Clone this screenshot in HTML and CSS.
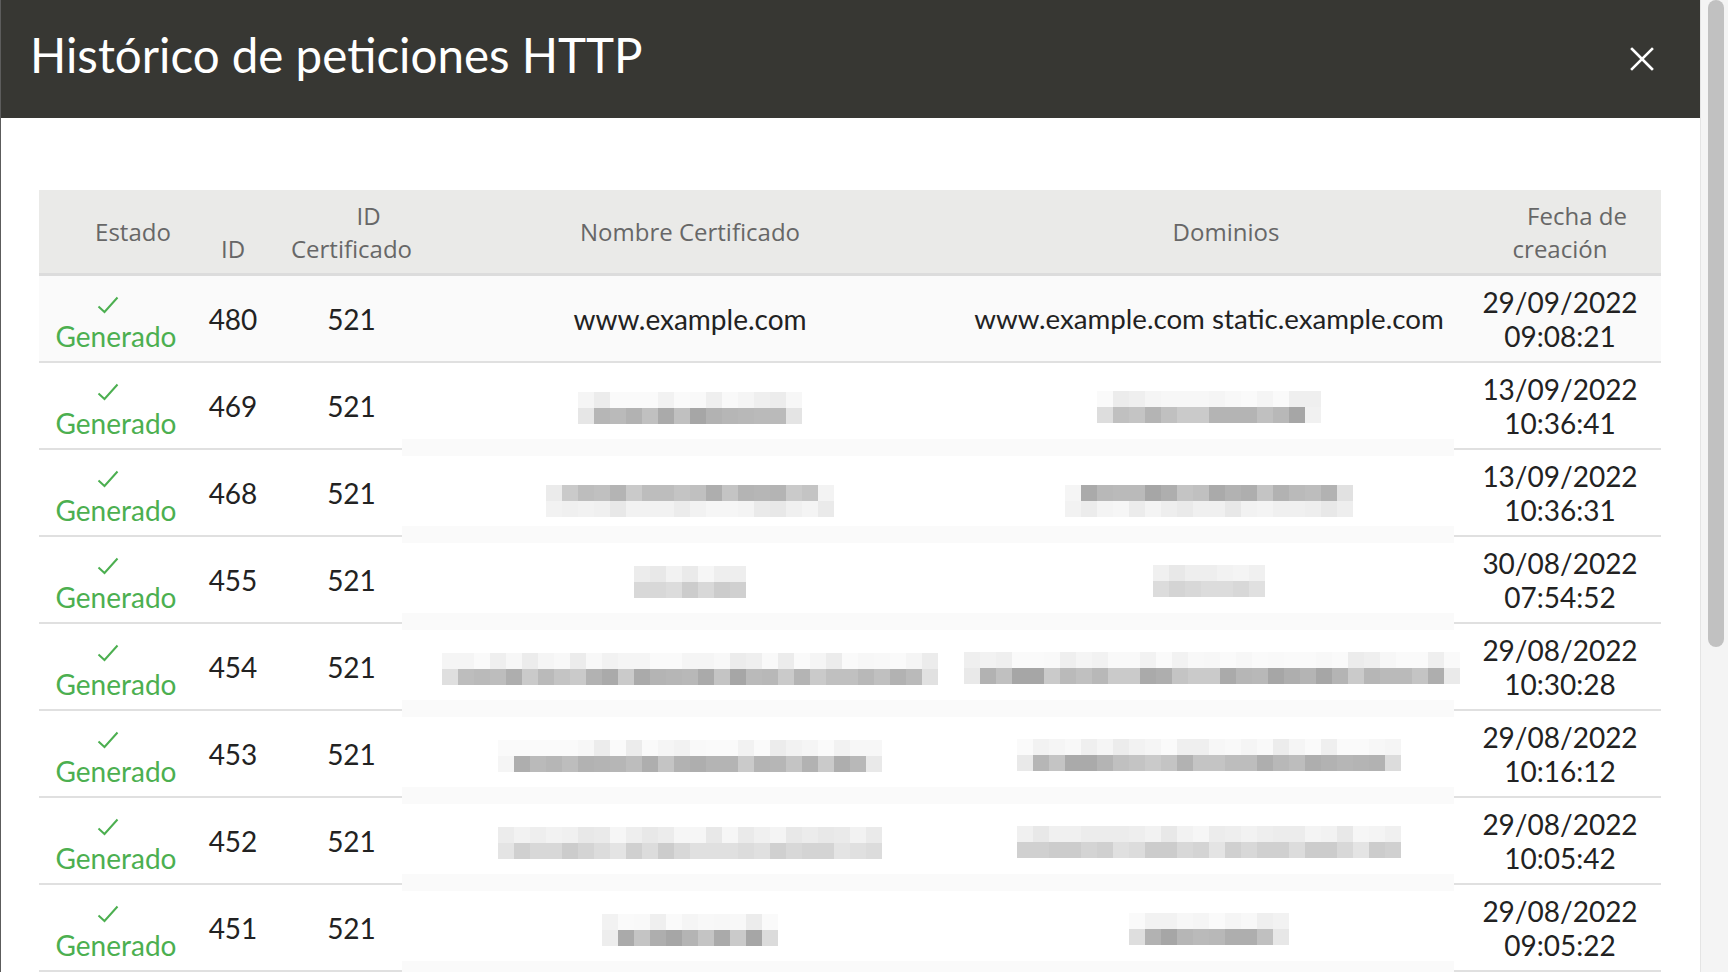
FILE: index.html
```html
<!DOCTYPE html>
<html lang="es">
<head>
<meta charset="utf-8">
<title>Histórico de peticiones HTTP</title>
<link rel="stylesheet" href="styles.css">
</head>
<body>
<div class="app">
  <div class="modal">
    <header class="modal-header">
      <h1 class="modal-title">Histórico de peticiones HTTP</h1>
      <button class="close" aria-label="Cerrar">
        <svg viewBox="0 0 24 24" width="24" height="24"><path d="M2 2 L22 22 M22 2 L2 22" stroke="#fff" stroke-width="2.6" stroke-linecap="square" fill="none"/></svg>
      </button>
    </header>
    <div class="modal-body">
      <table class="history">
        <colgroup>
          <col class="w-estado"><col class="w-id"><col class="w-cert"><col class="w-name"><col class="w-dom"><col class="w-date">
        </colgroup>
        <thead>
          <tr>
            <th class="c-estado">Estado</th>
            <th class="c-id">ID</th>
            <th class="c-cert"><span class="l1">ID</span><span class="l2">Certificado</span></th>
            <th class="c-name">Nombre Certificado</th>
            <th class="c-dom">Dominios</th>
            <th class="c-date"><span class="l1">Fecha de</span><span class="l2">creación</span></th>
          </tr>
        </thead>
        <tbody>
          <tr class="first">
            <td class="c-estado"><div class="status"><svg class="check" viewBox="0 0 22 18" width="22" height="18"><polyline points="1.5,10.5 7.5,16 20.5,1.5" fill="none" stroke="#4caf50" stroke-width="2"/></svg><span>Generado</span></div></td>
            <td class="c-id">480</td>
            <td class="c-cert">521</td>
            <td class="c-name">www.example.com</td>
            <td class="c-dom">www.example.com static.example.com</td>
            <td class="c-date">29/09/2022<br>09:08:21</td>
          </tr>
          <tr class="blur-top">
            <td class="c-estado"><div class="status"><svg class="check" viewBox="0 0 22 18" width="22" height="18"><polyline points="1.5,10.5 7.5,16 20.5,1.5" fill="none" stroke="#4caf50" stroke-width="2"/></svg><span>Generado</span></div></td>
            <td class="c-id">469</td>
            <td class="c-cert">521</td>
            <td class="c-name hidden-cell"><div class="mosaic" data-cols="14" data-rows="l,d" data-seed="11"></div></td>
            <td class="c-dom hidden-cell"><div class="mosaic" data-cols="14" data-rows="l,d" data-seed="23"></div></td>
            <td class="c-date">13/09/2022<br>10:36:41</td>
          </tr>
          <tr>
            <td class="c-estado"><div class="status"><svg class="check" viewBox="0 0 22 18" width="22" height="18"><polyline points="1.5,10.5 7.5,16 20.5,1.5" fill="none" stroke="#4caf50" stroke-width="2"/></svg><span>Generado</span></div></td>
            <td class="c-id">468</td>
            <td class="c-cert">521</td>
            <td class="c-name hidden-cell"><div class="mosaic low" data-cols="18" data-rows="d,f" data-seed="37"></div></td>
            <td class="c-dom hidden-cell"><div class="mosaic low" data-cols="18" data-rows="d,f" data-seed="41"></div></td>
            <td class="c-date">13/09/2022<br>10:36:31</td>
          </tr>
          <tr>
            <td class="c-estado"><div class="status"><svg class="check" viewBox="0 0 22 18" width="22" height="18"><polyline points="1.5,10.5 7.5,16 20.5,1.5" fill="none" stroke="#4caf50" stroke-width="2"/></svg><span>Generado</span></div></td>
            <td class="c-id">455</td>
            <td class="c-cert">521</td>
            <td class="c-name hidden-cell"><div class="mosaic" data-cols="7" data-rows="f,m" data-seed="53"></div></td>
            <td class="c-dom hidden-cell"><div class="mosaic" data-cols="7" data-rows="f,m" data-seed="59"></div></td>
            <td class="c-date">30/08/2022<br>07:54:52</td>
          </tr>
          <tr>
            <td class="c-estado"><div class="status"><svg class="check" viewBox="0 0 22 18" width="22" height="18"><polyline points="1.5,10.5 7.5,16 20.5,1.5" fill="none" stroke="#4caf50" stroke-width="2"/></svg><span>Generado</span></div></td>
            <td class="c-id">454</td>
            <td class="c-cert">521</td>
            <td class="c-name hidden-cell"><div class="mosaic" data-cols="31" data-rows="l,d" data-seed="61"></div></td>
            <td class="c-dom hidden-cell"><div class="mosaic" data-cols="31" data-rows="l,d" data-seed="67"></div></td>
            <td class="c-date">29/08/2022<br>10:30:28</td>
          </tr>
          <tr>
            <td class="c-estado"><div class="status"><svg class="check" viewBox="0 0 22 18" width="22" height="18"><polyline points="1.5,10.5 7.5,16 20.5,1.5" fill="none" stroke="#4caf50" stroke-width="2"/></svg><span>Generado</span></div></td>
            <td class="c-id">453</td>
            <td class="c-cert">521</td>
            <td class="c-name hidden-cell"><div class="mosaic" data-cols="24" data-rows="l,d" data-seed="71"></div></td>
            <td class="c-dom hidden-cell"><div class="mosaic" data-cols="24" data-rows="l,d" data-seed="73"></div></td>
            <td class="c-date">29/08/2022<br>10:16:12</td>
          </tr>
          <tr>
            <td class="c-estado"><div class="status"><svg class="check" viewBox="0 0 22 18" width="22" height="18"><polyline points="1.5,10.5 7.5,16 20.5,1.5" fill="none" stroke="#4caf50" stroke-width="2"/></svg><span>Generado</span></div></td>
            <td class="c-id">452</td>
            <td class="c-cert">521</td>
            <td class="c-name hidden-cell"><div class="mosaic" data-cols="24" data-rows="f,m" data-seed="79"></div></td>
            <td class="c-dom hidden-cell"><div class="mosaic" data-cols="24" data-rows="f,m" data-seed="83"></div></td>
            <td class="c-date">29/08/2022<br>10:05:42</td>
          </tr>
          <tr>
            <td class="c-estado"><div class="status"><svg class="check" viewBox="0 0 22 18" width="22" height="18"><polyline points="1.5,10.5 7.5,16 20.5,1.5" fill="none" stroke="#4caf50" stroke-width="2"/></svg><span>Generado</span></div></td>
            <td class="c-id">451</td>
            <td class="c-cert">521</td>
            <td class="c-name hidden-cell"><div class="mosaic" data-cols="11" data-rows="l,d" data-seed="89"></div></td>
            <td class="c-dom hidden-cell"><div class="mosaic" data-cols="10" data-rows="l,d" data-seed="97"></div></td>
            <td class="c-date">29/08/2022<br>09:05:22</td>
          </tr>
        </tbody>
      </table>
    </div>
  </div>
  <div class="scrollbar"><div class="thumb"></div></div>
</div>
<script src="script.js"></script>
</body>
</html>
```
FILE: styles.css
```css
* { box-sizing: border-box; }
html, body { margin: 0; height: 100%; }
body {
  background: #5c5c5c;
  font-family: Lato, "Open Sans", sans-serif;
  overflow: hidden;
}
.app {
  display: flex;
  height: 972px;
  padding-left: 1px;
}
.modal {
  flex: 1;
  background: #fff;
  display: flex;
  flex-direction: column;
  overflow: hidden;
}
.modal-header {
  flex: 0 0 118px;
  background: #373733;
  display: flex;
  align-items: center;
  justify-content: space-between;
  padding: 0 46px 8px 29px;
}
.modal-title {
  margin: 0;
  color: #fff;
  font-family: Lato, sans-serif;
  font-weight: 400;
  font-size: 47.5px;
  line-height: 1;
}
.close {
  border: 0;
  background: none;
  padding: 0;
  margin-top: 7px;
  width: 24px;
  height: 24px;
  display: flex;
}
.modal-body {
  padding: 72px 38px 0 38px;
}
.history {
  width: 1622px;
  table-layout: fixed;
  border-collapse: separate;
  border-spacing: 0;
}
.w-estado { width: 154px; }
.w-id { width: 80px; }
.w-cert { width: 129px; }
.w-name { width: 548px; }
.w-dom { width: 504px; }
.w-date { width: 207px; }

.history th {
  background: #eaeae8;
  color: #676767;
  font-family: "Open Sans", sans-serif;
  font-weight: 400;
  font-size: 24px;
  line-height: 33px;
  padding: 8.5px 0;
  border-bottom: 3px solid #dcdcdc;
  text-align: center;
  vertical-align: middle;
}
.history th .l1, .history th .l2 { display: block; }
.history th.c-estado { padding-left: 34px; }
.history th.c-id { vertical-align: bottom; }
.history th.c-cert .l2 { margin-right: -28px; }
.history th.c-cert .l1 { margin-right: -28px; padding-left: 34px; }
.history th.c-name { padding-left: 28px; }
.history th.c-dom { padding-left: 48px; }
.history th.c-date { padding-left: 5px; }
.history th.c-date .l1 { padding-left: 34px; }

.history td {
  color: #222;
  font-size: 28px;
  line-height: 34px;
  padding: 8.5px 0;
  border-bottom: 2px solid #e0e0e0;
  text-align: center;
  vertical-align: middle;
  white-space: nowrap;
}
.history tr.first td { background: #fafafa; }
.history td.c-cert { padding-left: 28px; }
.history td.c-name { padding-left: 28px; }
.history td.c-dom { padding-left: 14px; font-size: 27.7px; }
.history td.c-date { padding-left: 5px; }

.history td.hidden-cell {
  border-bottom-color: #fafafa;
  background: linear-gradient(to bottom, #fafafa 0 6px, #fff 6px calc(100% - 9px), #fafafa calc(100% - 9px));
}
.history tr.blur-top td.hidden-cell {
  background: linear-gradient(to bottom, #fff 0 calc(100% - 9px), #fafafa calc(100% - 9px));
}

.status {
  display: flex;
  flex-direction: column;
  align-items: center;
  color: #4caf50;
}
.check {
  display: block;
  margin: 11px 16px 5px 0;
}

.mosaic {
  display: inline-flex;
  flex-direction: column;
  vertical-align: middle;
}
.mosaic.low { margin-top: 16px; }
.mrow { display: flex; }
.mrow i { display: block; width: 16px; height: 16px; }

.scrollbar {
  flex: 0 0 28px;
  background: #f4f4f4;
  border-left: 1px solid #e4e4e4;
  padding: 0 4px 0 7px;
}
.thumb {
  height: 647px;
  background: #c1c1c1;
  border-radius: 8px;
}
```
FILE: script.js
```js
(function () {
  var palettes = {
    l: [250, 250, 250, 249, 248, 247, 245, 242, 239, 236],
    d: [166, 170, 174, 178, 180, 182, 184, 186, 189, 192, 196, 202],
    m: [204, 208, 212, 216, 220, 224, 228],
    f: [232, 234, 236, 238, 240, 242, 244, 246]
  };
  document.querySelectorAll('.mosaic').forEach(function (el) {
    var seed = +el.dataset.seed || 1;
    function rnd() {
      seed = (seed * 9301 + 49297) % 233280;
      return seed / 233280;
    }
    var n = +el.dataset.cols;
    el.dataset.rows.split(',').forEach(function (kind) {
      var row = document.createElement('div');
      row.className = 'mrow';
      var pal = palettes[kind];
      for (var i = 0; i < n; i++) {
        var v = pal[Math.floor(rnd() * pal.length)];
        if (kind === 'd' && (i === 0 || i === n - 1)) v = 218 + Math.floor(rnd() * 28);
        var c = document.createElement('i');
        c.style.background = 'rgb(' + v + ',' + v + ',' + v + ')';
        row.appendChild(c);
      }
      el.appendChild(row);
    });
  });
})();
```
